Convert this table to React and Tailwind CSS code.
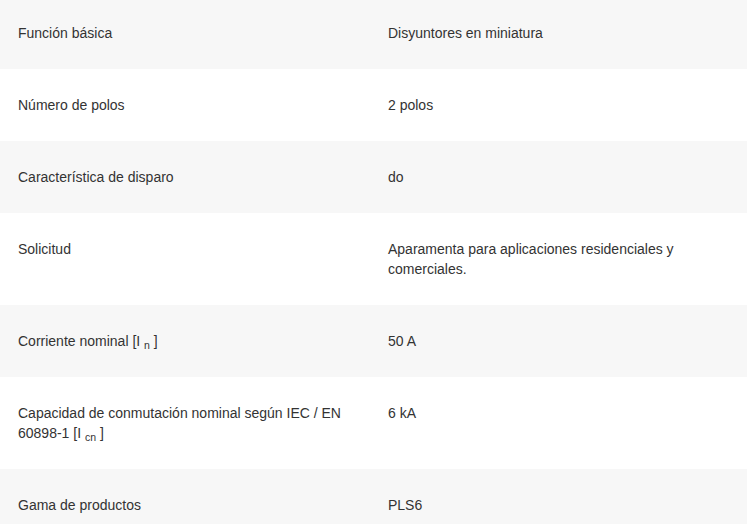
const rows = [
  { label: "Función básica", value: "Disyuntores en miniatura" },
  { label: "Número de polos", value: "2 polos" },
  { label: "Característica de disparo", value: "do" },
  {
    label: "Solicitud",
    value: "Aparamenta para aplicaciones residenciales y comerciales.",
  },
  {
    label: (
      <>
        Corriente nominal [I <sub>n</sub> ]
      </>
    ),
    value: "50 A",
  },
  {
    label: (
      <>
        Capacidad de conmutación nominal según IEC / EN 60898-1 [I{" "}
        <sub>cn</sub> ]
      </>
    ),
    value: "6 kA",
  },
  { label: "Gama de productos", value: "PLS6" },
];

function SpecRow({ label, value, shaded }) {
  return (
    <div
      className={`grid grid-cols-[370px_1fr] ${shaded ? "bg-[#f7f7f7]" : "bg-white"}`}
    >
      <div className="py-[26px] pl-[18px] pr-4">{label}</div>
      <div className="py-[26px] pl-[18px] pr-[18px]">{value}</div>
    </div>
  );
}

export default function App() {
  return (
    <div className="h-[524px] w-[747px] overflow-hidden bg-white font-['Liberation_Sans',Arial,sans-serif] text-[14px] leading-5 text-[#333]">
      <div className="-mt-[3px]">
        {rows.map((row, i) => (
          <SpecRow key={i} label={row.label} value={row.value} shaded={i % 2 === 0} />
        ))}
      </div>
    </div>
  );
}
